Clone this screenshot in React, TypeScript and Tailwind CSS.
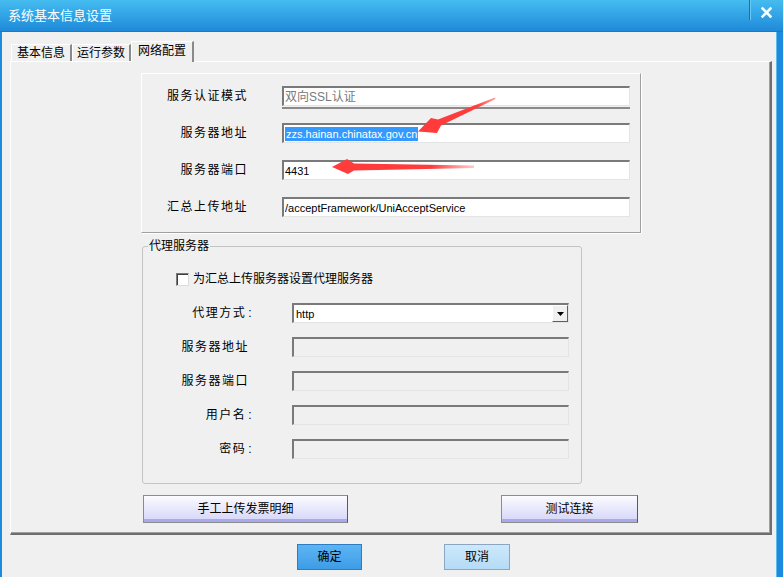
import React from 'react';

const sunken =
  'border-t-2 border-l-2 border-r border-b border-t-[#7a7a7a] border-l-[#7a7a7a] border-r-[#e4e4e4] border-b-[#e4e4e4]';

function TopField({
  label,
  children,
  extraLine,
}: {
  label: string;
  children: React.ReactNode;
  extraLine?: boolean;
}) {
  return (
    <div className="flex items-center h-[20px]">
      <div className="w-[106px] text-right text-[12px] leading-[14px] tracking-[1.5px]">{label}</div>
      <div className="ml-[34px] w-[348px] relative">
        <div className={`h-[20px] bg-white ${sunken} flex items-center pl-[1px] text-[11px] leading-[14px]`}>
          {children}
        </div>
        {extraLine && <div className="absolute left-0 right-0 -bottom-[3px] h-[2px] bg-[#8a8a8a]" />}
      </div>
    </div>
  );
}

function ProxyField({
  label,
  colon,
  children,
}: {
  label: string;
  colon?: boolean;
  children?: React.ReactNode;
}) {
  return (
    <div className="flex items-center h-[20px]">
      <div
        className={`text-right text-[12px] leading-[14px] tracking-[1.5px] ${
          colon ? 'w-[110px] mr-[39px]' : 'w-[106px] mr-[43px]'
        }`}
      >
        {label}
        {colon && <span className="ml-[2px]">:</span>}
      </div>
      <div className="w-[277px]">
        {children ?? <div className={`h-[20px] bg-[#f0f0f0] ${sunken}`} />}
      </div>
    </div>
  );
}

function Tab({ label, active, w }: { label: string; active?: boolean; w: string }) {
  return (
    <div
      className={`${w} flex items-center justify-center text-[12px] leading-[14px] border-l border-t border-l-white border-t-white border-r-2 border-r-[#8a8a8a] ${
        active ? 'h-[21px] bg-[#f0f0f0] relative z-10 -mb-px pb-[2px]' : 'h-[17px] bg-[#f0f0f0]'
      }`}
    >
      {label}
    </div>
  );
}

export default function App() {
  return (
    <div className="relative w-[783px] h-[577px] overflow-hidden flex flex-col bg-[#f0f0f0] text-black font-['Liberation_Sans','Noto_Sans_CJK_SC',sans-serif]">
      {/* title bar */}
      <div className="h-[32px] flex items-center bg-gradient-to-b from-[#45bcf0] to-[#1f8ad9] border-b border-[#1a78c8]">
        <span className="ml-[8px] text-[13px] leading-[16px] text-white">系统基本信息设置</span>
        <div className="ml-auto h-full flex items-start">
          <div className="w-px h-[20px] bg-[#1670b8] shadow-[1px_0_0_#6cc8f4]" />
          <div className="w-[33px] h-[24px] flex items-center justify-center">
            <svg width="11" height="11" viewBox="0 0 11 11">
              <path d="M1.5 1.5 L9.5 9.5 M9.5 1.5 L1.5 9.5" stroke="#fff" strokeWidth="2.6" strokeLinecap="square" />
            </svg>
          </div>
        </div>
      </div>

      <div className="flex-1 flex">
        <div className="w-[2px] bg-[#1c8ade]" />
        <div className="flex-1 flex flex-col">
          {/* tabs */}
          <div className="flex items-end h-[29px] pl-[9px]">
            <Tab label="基本信息" w="w-[61px]" />
            <Tab label="运行参数" w="w-[59px]" />
            <Tab label="网络配置" w="w-[63px]" active />
          </div>

          {/* tab panel */}
          <div className="ml-[8px] w-[762px] h-[474px] border-l border-t border-l-white border-t-white border-r-2 border-b-2 border-r-[#6e6e6e] border-b-[#6e6e6e] shadow-[inset_-1px_-1px_0_#a0a0a0] flex flex-col">
            {/* server settings */}
            <div className="ml-[130px] mt-[11px] w-[500px] h-[160px] border-l border-t border-l-white border-t-white border-r border-b border-r-[#a0a0a0] border-b-[#a0a0a0] shadow-[1px_1px_0_#fff] pt-[12px] flex flex-col gap-[17px]">
              <TopField label="服务认证模式" extraLine>
                <span className="text-[#7a7a7a] text-[12px]">双向SSL认证</span>
              </TopField>
              <TopField label="服务器地址">
                <span className="bg-[#3399ff] text-white px-px">zzs.hainan.chinatax.gov.cn</span>
              </TopField>
              <TopField label="服务器端口">
                <span>4431</span>
              </TopField>
              <TopField label="汇总上传地址">
                <span>/acceptFramework/UniAcceptService</span>
              </TopField>
            </div>

            {/* proxy */}
            <fieldset className="ml-[131px] mt-[6px] w-[440px] h-[245px] border border-[#c4c4c4] rounded-[3px]">
              <legend className="ml-[5px] px-px text-[12px] leading-[14px]">代理服务器</legend>
              <div className="pl-[33px] pt-[19px] flex items-center h-[33px]">
                <div className="w-[13px] h-[13px] bg-white border border-[#7a7a7a] border-r-[#dcdcdc] border-b-[#dcdcdc] shadow-[inset_1px_1px_0_#404040]" />
                <span className="ml-[4px] text-[12px] leading-[14px]">为汇总上传服务器设置代理服务器</span>
              </div>
              <div className="mt-[17px] flex flex-col gap-[14px]">
                <ProxyField label="代理方式" colon>
                  <div className={`h-[20px] bg-white ${sunken} flex items-center`}>
                    <span className="pl-[2px] text-[11px] leading-[14px]">http</span>
                    <div className="ml-auto w-[16px] h-full bg-[#f0f0f0] border-l border-t border-l-white border-t-white border-r border-b border-r-[#606060] border-b-[#606060] flex items-center justify-center">
                      <svg width="7" height="4" viewBox="0 0 7 4">
                        <path d="M0 0 H7 L3.5 4 Z" fill="#000" />
                      </svg>
                    </div>
                  </div>
                </ProxyField>
                <ProxyField label="服务器地址" />
                <ProxyField label="服务器端口" />
                <ProxyField label="用户名" colon />
                <ProxyField label="密码" colon />
              </div>
            </fieldset>

            {/* action buttons */}
            <div className="ml-[132px] mt-[11px] flex">
              <button className="w-[205px] h-[28px] text-[12px] leading-[14px] bg-gradient-to-b from-[#fbfbff] to-[#d4d4f8] border border-[#8c8c8c] border-r-[#5a5a5a] shadow-[inset_0_-3px_0_#a9a9f0]">
                手工上传发票明细
              </button>
              <button className="ml-[153px] w-[137px] h-[28px] text-[12px] leading-[14px] bg-gradient-to-b from-[#fbfbff] to-[#d4d4f8] border border-[#8c8c8c] border-r-[#5a5a5a] shadow-[inset_0_-3px_0_#a9a9f0]">
                测试连接
              </button>
            </div>
          </div>

          {/* dialog buttons */}
          <div className="flex pt-[9px] pl-[295px]">
            <button className="w-[65px] h-[26px] text-[12px] leading-[14px] border border-[#2f7cc4] bg-gradient-to-b from-[#5bb5f2] via-[#4ea9ee] to-[#3d9ce6]">
              确定
            </button>
            <button className="ml-[82px] w-[66px] h-[26px] text-[12px] leading-[14px] border border-[#8aa6c2] bg-gradient-to-b from-[#cde9fb] to-[#b5dbf6]">
              取消
            </button>
          </div>
        </div>
        <div className="w-[7px] bg-[#1c8ade] border-l border-[#5fb8ee]" />
      </div>

      {/* red annotation arrows */}
      <svg className="absolute inset-0 pointer-events-none" width="783" height="577" viewBox="0 0 783 577">
        <defs>
          <linearGradient id="fade1" x1="495" y1="98" x2="418" y2="131" gradientUnits="userSpaceOnUse">
            <stop offset="0" stopColor="#ff4040" stopOpacity="0.5" />
            <stop offset="0.25" stopColor="#ff3b3b" />
            <stop offset="1" stopColor="#ff3b3b" />
          </linearGradient>
          <linearGradient id="fade2" x1="474" y1="167" x2="332" y2="167" gradientUnits="userSpaceOnUse">
            <stop offset="0" stopColor="#ff4d4d" stopOpacity="0.3" />
            <stop offset="0.3" stopColor="#ff3b3b" />
            <stop offset="1" stopColor="#ff3b3b" />
          </linearGradient>
        </defs>
        <polygon
          points="495,97.5 438,119.5 431,118 418,131.5 437,133 441,125.5 495.5,99"
          fill="url(#fade1)"
        />
        <polygon
          points="474,165.5 354,163.5 347,159 332,167 348,174 354,170.5 474,168"
          fill="url(#fade2)"
        />
      </svg>
    </div>
  );
}
